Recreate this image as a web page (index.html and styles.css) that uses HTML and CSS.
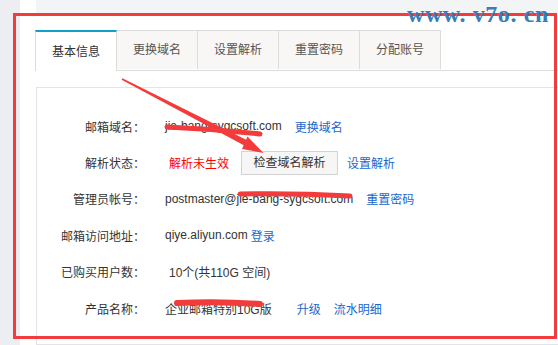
FILE: index.html
```html
<!DOCTYPE html>
<html>
  <head>
    <title>基本信息</title>
    <meta charset="utf-8" />
    <link rel="stylesheet" href="styles.css">
  </head>
  <body>
    <div id="page">
      <div class="side"></div>
      <div class="main">
        <div class="topband"></div>
        <ul class="tabs">
          <li class="tab on">基本信息</li>
          <li class="tab">更换域名</li>
          <li class="tab">设置解析</li>
          <li class="tab">重置密码</li>
          <li class="tab">分配账号</li>
        </ul>
        <div class="panel">
          <div class="row">
            <span class="label">邮箱域名：</span>
            <span class="value">jie-bang-sygcsoft.com</span>
            <a class="link gap">更换域名</a>
          </div>
          <div class="row">
            <span class="label">解析状态：</span>
            <span class="value warn">解析未生效</span>
            <a class="btn">检查域名解析</a>
            <a class="link near">设置解析</a>
          </div>
          <div class="row">
            <span class="label">管理员帐号：</span>
            <span class="value">postmaster@jie-bang-sygcsoft.com</span>
            <a class="link gap">重置密码</a>
          </div>
          <div class="row">
            <span class="label">邮箱访问地址：</span>
            <span class="value">qiye.aliyun.com</span>
            <a class="link tight">登录</a>
          </div>
          <div class="row">
            <span class="label">已购买用户数：</span>
            <span class="value pad">10个(共110G 空间)</span>
          </div>
          <div class="row">
            <span class="label">产品名称：</span>
            <span class="value">企业邮箱特别10G版</span>
            <a class="link wide">升级</a>
            <a class="link gap">流水明细</a>
          </div>
        </div>
      </div>

      <!-- annotations drawn over the screenshot -->
      <div class="frame"></div>
      <div class="stamp">www. v7o. cn</div>
      <svg class="ink" width="558" height="345" viewBox="0 0 558 345">
        <polygon points="121.6,79.7 122.4,78.3 249.2,141.3 246.6,146.7" />
        <polygon points="263.5,153 242,149 247.5,136.5" />
        <path d="M167,127 Q212,129 260,134" />
        <path d="M240,194 Q295,193 350,196" />
        <path class="fat" d="M177,303 Q220,301 260,304" />
      </svg>
    </div>
  </body>
</html>
```

FILE: styles.css
```css
body {
    margin: 0;
    background: #fff;
    font-family: "Liberation Sans", "Noto Sans CJK SC", sans-serif;
    font-size: 12px;
    color: #333; }

div#page {
    position: relative;
    display: flex;
    width: 558px;
    height: 345px;
    overflow: hidden; }

div.side {
    width: 20px;
    flex-shrink: 0;
    background: #eceef1; }

div.main {
    flex: 1;
    background: #fff; }

div.topband {
    height: 14px;
    margin-left: 16px;
    background: #f3f4f6; }

ul.tabs {
    display: flex;
    list-style: none;
    margin: 16px 0 0 15px;
    padding: 0;
    border-bottom: 1px solid #dcdcdc; }

li.tab {
    width: 80px;
    height: 38px;
    line-height: 38px;
    text-align: center;
    color: #555;
    background: #f8f7f6;
    border: 1px solid #dcdcdc;
    border-bottom: none;
    border-left: none; }
li.tab.on {
    height: 38px;
    line-height: 40px;
    color: #333;
    background: #fff;
    border-left: 1px solid #dcdcdc;
    border-top: 2px solid #12a0c9;
    margin-bottom: -1px;
    padding-bottom: 1px; }

div.panel {
    margin: 16px 0 0 16px;
    height: 236px;
    padding-top: 20px;
    border: 1px solid #e1e5ea;
    border-right: none; }

div.row {
    display: flex;
    align-items: center;
    height: 36.4px; }

span.label {
    width: 108px;
    text-align: right;
    flex-shrink: 0; }

span.value {
    margin-left: 20px;
    white-space: nowrap; }
span.value.warn {
    color: #f00;
    padding-left: 4px; }
span.value.pad {
    padding-left: 4px; }

a.link {
    color: #1a66cc;
    white-space: nowrap; }
a.link.gap { margin-left: 13px; }
a.link.near { margin-left: 9px; }
a.link.tight { margin-left: 3px; }
a.link.wide { margin-left: 25px; }

a.btn {
    display: inline-block;
    box-sizing: border-box;
    width: 97px;
    height: 24px;
    line-height: 22px;
    margin-left: 12px;
    text-align: center;
    color: #333;
    background: #f6f6f6;
    border: 1px solid #d2d2d2; }

div.frame {
    position: absolute;
    left: 13px;
    top: 13px;
    width: 538px;
    height: 320px;
    border: 3px solid #f43b3b; }

div.stamp {
    position: absolute;
    left: 407px;
    top: 1px;
    font-family: "Liberation Serif", serif;
    font-size: 24px;
    font-weight: bold;
    letter-spacing: 0.6px;
    color: #347fb9;
    white-space: pre; }

svg.ink {
    position: absolute;
    left: 0;
    top: 0; }
svg.ink polygon {
    fill: #f43b3b; }
svg.ink path {
    fill: none;
    stroke: #f43b3b;
    stroke-width: 5;
    stroke-linecap: round; }
svg.ink path.fat {
    stroke-width: 6; }
```
